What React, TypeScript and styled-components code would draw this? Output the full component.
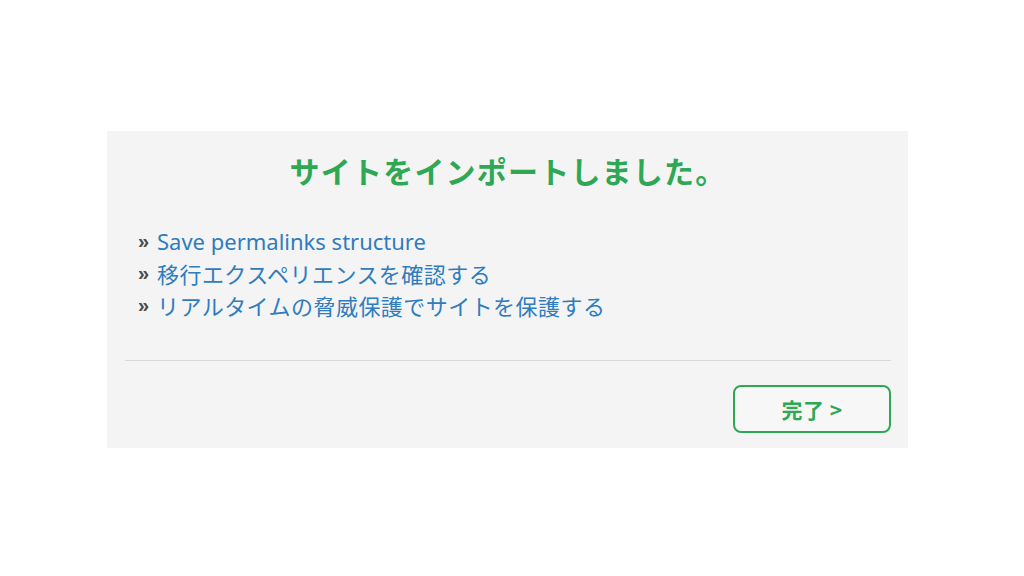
import React from "react";
import styled, { createGlobalStyle } from "styled-components";

const GlobalStyle = createGlobalStyle`
  html, body {
    margin: 0;
    padding: 0;
    background: #ffffff;
  }
  body {
    font-family: "Noto Sans", "Noto Sans CJK JP", sans-serif;
  }
`;

const Page = styled.div`
  width: 1024px;
  height: 576px;
  padding: 131px 0 0 107px;
  box-sizing: border-box;
`;

const Panel = styled.div`
  width: 801px;
  box-sizing: border-box;
  background: #f4f4f4;
  padding: 19px 17px 15px 18px;
  display: flex;
  flex-direction: column;
`;

const Title = styled.h2`
  margin: 0;
  text-align: center;
  font-family: "Noto Sans CJK JP", sans-serif;
  font-size: 30px;
  line-height: 40px;
  font-weight: 700;
  color: #2fa856;
  letter-spacing: 1.2px;
`;

const Steps = styled.ul`
  list-style: none;
  margin: 35px 0 0 13px;
  padding: 0;
  display: flex;
  flex-direction: column;
`;

const Step = styled.li`
  display: flex;
  align-items: center;
  height: 32px;
  font-size: 21px;
`;

const Marker = styled.span`
  width: 19px;
  flex: none;
  font-family: "Liberation Sans", sans-serif;
  font-weight: 700;
  font-size: 20px;
  color: #4a4a4a;
`;

const StepLink = styled.a<{ $latin?: boolean }>`
  color: #2f7cbf;
  text-decoration: none;
  font-family: ${p => (p.$latin ? '"Noto Sans", sans-serif' : '"Noto Sans CJK JP", sans-serif')};
  font-size: 22px;
  letter-spacing: ${p => (p.$latin ? "0" : "0.45px")};
`;

const Divider = styled.hr`
  border: none;
  border-top: 1px solid #d8d8d8;
  margin: 39px 0 0 0;
  height: 0;
`;

const Footer = styled.div`
  display: flex;
  justify-content: flex-end;
  margin-top: 24px;
`;

const DoneButton = styled.button`
  width: 158px;
  height: 48px;
  box-sizing: border-box;
  border: 2px solid #2fa856;
  border-radius: 8px;
  background: #f7f7f7;
  color: #2fa856;
  font-family: "Noto Sans CJK JP", sans-serif;
  font-weight: 700;
  font-size: 21px;
  letter-spacing: 0.5px;
  cursor: pointer;
`;

const steps = [
  { text: "Save permalinks structure", latin: true },
  { text: "移行エクスペリエンスを確認する" },
  { text: "リアルタイムの脅威保護でサイトを保護する" },
];

export default function App() {
  return (
    <>
      <GlobalStyle />
      <Page>
        <Panel>
          <Title>サイトをインポートしました。</Title>
          <Steps>
            {steps.map(s => (
              <Step key={s.text}>
                <Marker>»</Marker>
                <StepLink href="#" $latin={s.latin}>{s.text}</StepLink>
              </Step>
            ))}
          </Steps>
          <Divider />
          <Footer>
            <DoneButton>完了 &gt;</DoneButton>
          </Footer>
        </Panel>
      </Page>
    </>
  );
}
